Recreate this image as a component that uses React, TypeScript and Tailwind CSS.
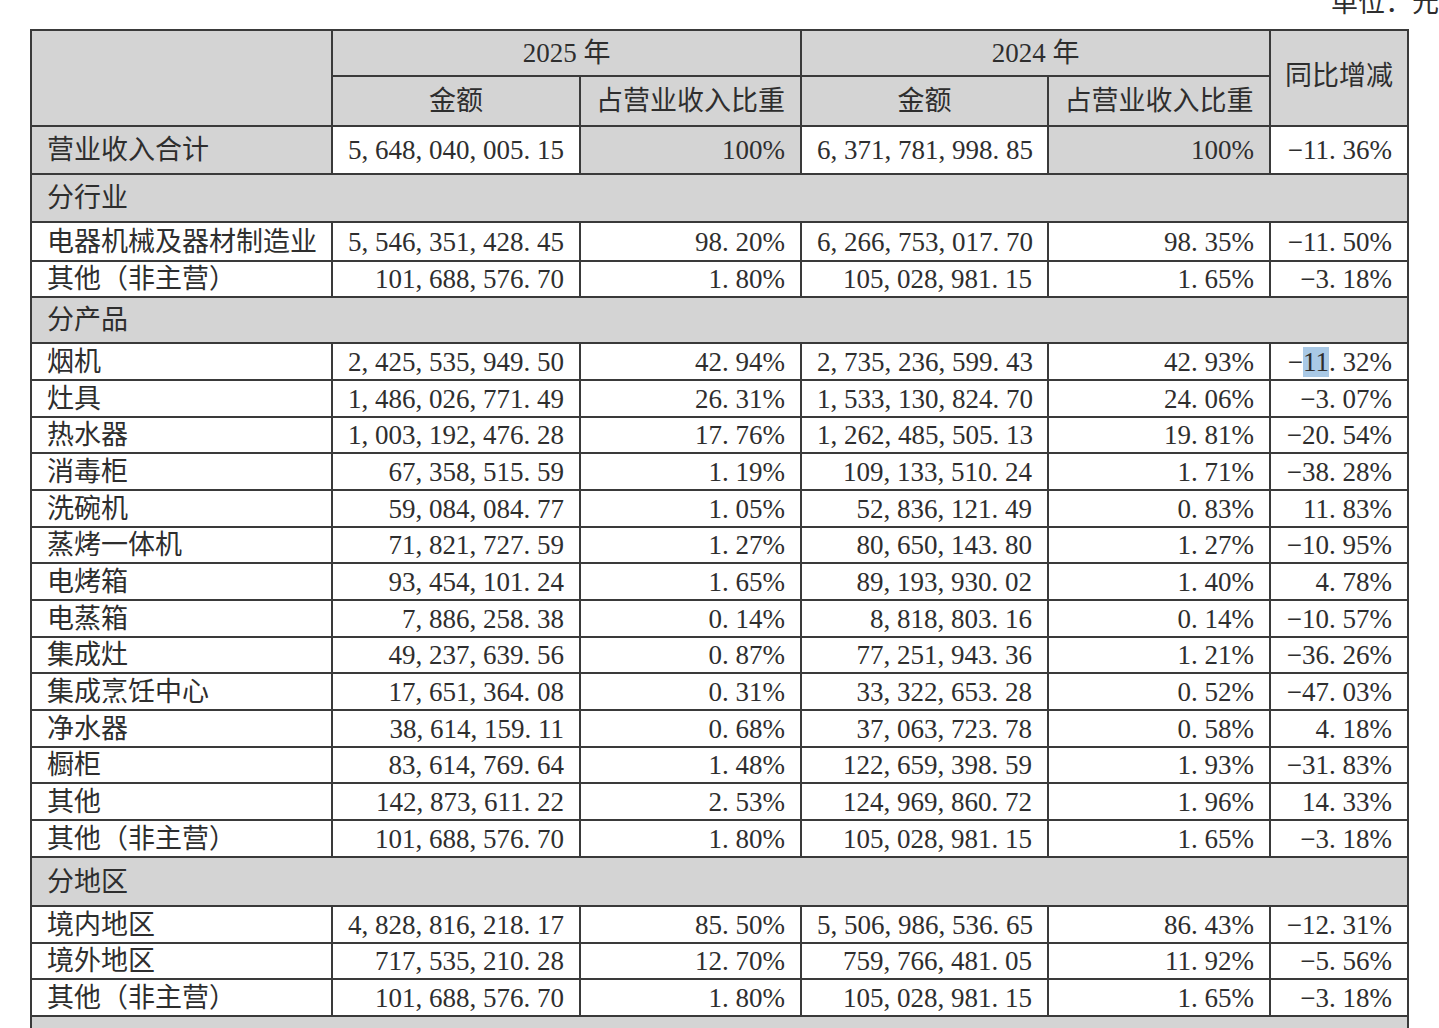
import React from "react";

type Row =
  | { kind: "section"; label: string; h: string }
  | { kind: "data"; label: string; v: [string, string, string, string, string]; h: string; hl?: boolean };

const rows: Row[] = [
  { kind: "section", label: "分行业", h: "h-[48px]" },
  { kind: "data", label: "电器机械及器材制造业", v: ["5, 546, 351, 428. 45", "98. 20%", "6, 266, 753, 017. 70", "98. 35%", "−11. 50%"], h: "h-[39px]" },
  { kind: "data", label: "其他（非主营）", v: ["101, 688, 576. 70", "1. 80%", "105, 028, 981. 15", "1. 65%", "−3. 18%"], h: "h-[36px]" },
  { kind: "section", label: "分产品", h: "h-[46px]" },
  { kind: "data", label: "烟机", v: ["2, 425, 535, 949. 50", "42. 94%", "2, 735, 236, 599. 43", "42. 93%", "−11. 32%"], h: "h-[37px]", hl: true },
  { kind: "data", label: "灶具", v: ["1, 486, 026, 771. 49", "26. 31%", "1, 533, 130, 824. 70", "24. 06%", "−3. 07%"], h: "h-[37px]" },
  { kind: "data", label: "热水器", v: ["1, 003, 192, 476. 28", "17. 76%", "1, 262, 485, 505. 13", "19. 81%", "−20. 54%"], h: "h-[36px]" },
  { kind: "data", label: "消毒柜", v: ["67, 358, 515. 59", "1. 19%", "109, 133, 510. 24", "1. 71%", "−38. 28%"], h: "h-[37px]" },
  { kind: "data", label: "洗碗机", v: ["59, 084, 084. 77", "1. 05%", "52, 836, 121. 49", "0. 83%", "11. 83%"], h: "h-[37px]" },
  { kind: "data", label: "蒸烤一体机", v: ["71, 821, 727. 59", "1. 27%", "80, 650, 143. 80", "1. 27%", "−10. 95%"], h: "h-[36px]" },
  { kind: "data", label: "电烤箱", v: ["93, 454, 101. 24", "1. 65%", "89, 193, 930. 02", "1. 40%", "4. 78%"], h: "h-[37px]" },
  { kind: "data", label: "电蒸箱", v: ["7, 886, 258. 38", "0. 14%", "8, 818, 803. 16", "0. 14%", "−10. 57%"], h: "h-[37px]" },
  { kind: "data", label: "集成灶", v: ["49, 237, 639. 56", "0. 87%", "77, 251, 943. 36", "1. 21%", "−36. 26%"], h: "h-[36px]" },
  { kind: "data", label: "集成烹饪中心", v: ["17, 651, 364. 08", "0. 31%", "33, 322, 653. 28", "0. 52%", "−47. 03%"], h: "h-[37px]" },
  { kind: "data", label: "净水器", v: ["38, 614, 159. 11", "0. 68%", "37, 063, 723. 78", "0. 58%", "4. 18%"], h: "h-[37px]" },
  { kind: "data", label: "橱柜", v: ["83, 614, 769. 64", "1. 48%", "122, 659, 398. 59", "1. 93%", "−31. 83%"], h: "h-[36px]" },
  { kind: "data", label: "其他", v: ["142, 873, 611. 22", "2. 53%", "124, 969, 860. 72", "1. 96%", "14. 33%"], h: "h-[37px]" },
  { kind: "data", label: "其他（非主营）", v: ["101, 688, 576. 70", "1. 80%", "105, 028, 981. 15", "1. 65%", "−3. 18%"], h: "h-[37px]" },
  { kind: "section", label: "分地区", h: "h-[49px]" },
  { kind: "data", label: "境内地区", v: ["4, 828, 816, 218. 17", "85. 50%", "5, 506, 986, 536. 65", "86. 43%", "−12. 31%"], h: "h-[37px]" },
  { kind: "data", label: "境外地区", v: ["717, 535, 210. 28", "12. 70%", "759, 766, 481. 05", "11. 92%", "−5. 56%"], h: "h-[36px]" },
  { kind: "data", label: "其他（非主营）", v: ["101, 688, 576. 70", "1. 80%", "105, 028, 981. 15", "1. 65%", "−3. 18%"], h: "h-[37px]" },
  { kind: "section", label: "", h: "h-[48px]" },
];

const bd = "border-2 border-[#3a3a3a]";
const num = `${bd} px-[15px] text-right whitespace-nowrap`;

export default function App() {
  return (
    <div
      className="w-[1439px] h-[1028px] overflow-hidden bg-white text-[#2e2e2e] text-[27px] leading-[30px]"
      style={{ fontFamily: '"Liberation Serif", "Noto Sans CJK SC", serif' }}
    >
      <div className="h-[29px] flex justify-end">
        <span className="relative -top-[12px] whitespace-nowrap">单位：元</span>
      </div>
      <div className="pl-[30px]">
        <table className="table-fixed border-collapse w-[1377px]">
          <colgroup>
            <col className="w-[301px]" />
            <col className="w-[248px]" />
            <col className="w-[221px]" />
            <col className="w-[247px]" />
            <col className="w-[222px]" />
            <col className="w-[138px]" />
          </colgroup>
          <thead>
            <tr className="h-[46px] bg-[#d4d4d4]">
              <th rowSpan={2} className={`${bd} font-normal`}></th>
              <th colSpan={2} className={`${bd} font-normal text-center`}>2025 年</th>
              <th colSpan={2} className={`${bd} font-normal text-center`}>2024 年</th>
              <th rowSpan={2} className={`${bd} font-normal text-center align-top pt-[30px]`}>同比增减</th>
            </tr>
            <tr className="h-[50px] bg-[#d4d4d4]">
              <th className={`${bd} font-normal text-center`}>金额</th>
              <th className={`${bd} font-normal text-center`}>占营业收入比重</th>
              <th className={`${bd} font-normal text-center`}>金额</th>
              <th className={`${bd} font-normal text-center`}>占营业收入比重</th>
            </tr>
          </thead>
          <tbody>
            <tr className="h-[48px]">
              <td className={`${bd} px-[15px] bg-[#d4d4d4] whitespace-nowrap`}>营业收入合计</td>
              <td className={`${num} bg-white`}>5, 648, 040, 005. 15</td>
              <td className={`${num} bg-[#d4d4d4]`}>100%</td>
              <td className={`${num} bg-white`}>6, 371, 781, 998. 85</td>
              <td className={`${num} bg-[#d4d4d4]`}>100%</td>
              <td className={`${num} bg-white`}>−11. 36%</td>
            </tr>
            {rows.map((r, i) =>
              r.kind === "section" ? (
                <tr key={i} className={r.h}>
                  <td colSpan={6} className={`${bd} px-[15px] bg-[#d4d4d4] align-middle`}>
                    {r.label}
                  </td>
                </tr>
              ) : (
                <tr key={i} className={r.h}>
                  <td className={`${bd} px-[15px] whitespace-nowrap`}>{r.label}</td>
                  <td className={num}>{r.v[0]}</td>
                  <td className={num}>{r.v[1]}</td>
                  <td className={num}>{r.v[2]}</td>
                  <td className={num}>{r.v[3]}</td>
                  <td className={num}>
                    {r.hl ? (
                      <>
                        −<span className="bg-[#a9c9e6]">11</span>. 32%
                      </>
                    ) : (
                      r.v[4]
                    )}
                  </td>
                </tr>
              )
            )}
          </tbody>
        </table>
      </div>
    </div>
  );
}
